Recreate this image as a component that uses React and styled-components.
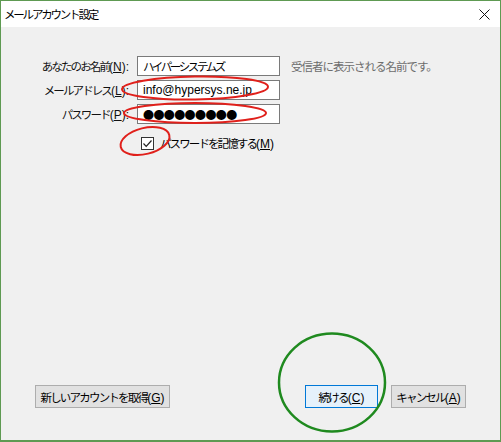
import { styled, createGlobalStyle } from 'styled-components';

const GlobalStyle = createGlobalStyle`
  html, body {
    margin: 0;
    padding: 0;
    background: #f0f0f0;
  }
  body {
    font-family: "Liberation Sans", "Noto Sans CJK JP", sans-serif;
  }
`

const Window = styled.div`
  position: relative;
  box-sizing: border-box;
  width: 501px;
  height: 442px;
  border: 1px solid #5e9a52;
  border-bottom-width: 2px;
  background: #f0f0f0;
  display: flex;
  flex-direction: column;
  color: #000;
`

const TitleBar = styled.div`
  height: 26px;
  background: #fff;
  display: flex;
  align-items: center;
  justify-content: space-between;
  padding: 0 10px 0 3px;
`

const Title = styled.div`
  font-family: "Noto Sans CJK JP", sans-serif;
  font-size: 11.5px;
  letter-spacing: -2.2px;
  color: #000;
`

const Form = styled.div`
  display: grid;
  grid-template-columns: 128px 143px auto;
  grid-auto-rows: 20px;
  column-gap: 8px;
  row-gap: 4px;
  margin-top: 29px;
  align-items: center;
`

const Label = styled.div`
  justify-self: end;
  font-family: "Noto Sans CJK JP", sans-serif;
  font-size: 11.5px;
  letter-spacing: -1.9px;
  white-space: nowrap;
  color: #111;
`

const Key = styled.span`
  font-family: "Liberation Sans", sans-serif;
  font-size: 12px;
  letter-spacing: 0;
`

const Field = styled.div`
  box-sizing: border-box;
  height: 20px;
  border: 1px solid #7a7a7a;
  background: #fff;
  padding: 0 5px;
  display: flex;
  align-items: center;
  white-space: nowrap;
  overflow: hidden;
  font-family: ${p => p.$latin ? '"Liberation Sans", sans-serif' : '"Noto Sans CJK JP", sans-serif'};
  font-size: ${p => p.$dots ? '11px' : p.$latin ? '12px' : '11.5px'};
  letter-spacing: ${p => p.$dots ? '-0.6px' : p.$latin ? '0' : '-2.4px'};
`

const Hint = styled.div`
  margin-left: 3px;
  font-family: "Noto Sans CJK JP", sans-serif;
  font-size: 11.5px;
  letter-spacing: -1px;
  color: #6d6d6d;
  white-space: nowrap;
`

const CheckRow = styled.div`
  grid-column: 2 / 4;
  display: flex;
  align-items: center;
  gap: 6px;
  margin: 7px 0 0 4px;
  align-self: start;
`

const Box = styled.div`
  box-sizing: border-box;
  width: 13px;
  height: 13px;
  border: 1px solid #333;
  background: #fff;
  display: flex;
  align-items: center;
  justify-content: center;
`

const CheckText = styled.span`
  font-family: "Noto Sans CJK JP", sans-serif;
  font-size: 11.5px;
  letter-spacing: -1.9px;
  white-space: nowrap;
`

const Footer = styled.div`
  margin-top: auto;
  display: flex;
  align-items: center;
  padding: 0 34px 32px 34px;
`

const Spacer = styled.div`
  flex: 1;
`

const Button = styled.button`
  box-sizing: border-box;
  width: ${p => p.$w}px;
  height: 23px;
  margin-left: ${p => p.$ml || 0}px;
  border: 1px solid ${p => p.$primary ? '#0078d7' : '#adadad'};
  background: ${p => p.$primary ? '#e5f1fb' : '#e1e1e1'};
  padding: 0;
  font-family: "Noto Sans CJK JP", sans-serif;
  font-size: 11.5px;
  letter-spacing: -1.8px;
  color: #000;
  white-space: nowrap;
`

const Overlay = styled.svg`
  position: absolute;
  top: -1px;
  left: -1px;
  width: 501px;
  height: 442px;
  pointer-events: none;
`

const Accel = ({ k, colon }) => (
  <Key>(<u>{k}</u>){colon ? ':' : ''}</Key>
)

export default function App() {
  return (
    <>
      <GlobalStyle />
      <Window>
        <TitleBar>
          <Title>メールアカウント設定</Title>
          <svg width="11" height="11" viewBox="0 0 11 11">
            <path d="M0.5 0.5 L10.5 10.5 M10.5 0.5 L0.5 10.5" stroke="#111" strokeWidth="1" fill="none" />
          </svg>
        </TitleBar>

        <Form>
          <Label>あなたのお名前<Accel k="N" colon /></Label>
          <Field>ハイパーシステムズ</Field>
          <Hint>受信者に表示される名前です。</Hint>

          <Label>メールアドレス<Accel k="L" colon /></Label>
          <Field $latin>info@hypersys.ne.jp</Field>
          <div />

          <Label>パスワード<Accel k="P" colon /></Label>
          <Field $dots>●●●●●●●●●</Field>
          <div />

          <div />
          <CheckRow>
            <Box>
              <svg width="11" height="11" viewBox="0 0 11 11">
                <path d="M1.5 5.5 L4.2 8.3 L9.5 2.5" stroke="#222" strokeWidth="1.2" fill="none" />
              </svg>
            </Box>
            <CheckText>パスワードを記憶する<Accel k="M" /></CheckText>
          </CheckRow>
        </Form>

        <Footer>
          <Button $w={135}>新しいアカウントを取得<Accel k="G" /></Button>
          <Spacer />
          <Button $w={73} $primary>続ける<Accel k="C" /></Button>
          <Button $w={75} $ml={13}>キャンセル<Accel k="A" /></Button>
        </Footer>

        <Overlay viewBox="0 0 501 442">
          <ellipse cx="195" cy="88" rx="73" ry="11.5" stroke="#e0201b" strokeWidth="2" fill="none" transform="rotate(-1 195 88)" />
          <ellipse cx="195" cy="113" rx="71" ry="10" stroke="#e0201b" strokeWidth="2" fill="none" />
          <ellipse cx="145" cy="141" rx="25" ry="13" stroke="#e0201b" strokeWidth="2" fill="none" transform="rotate(-14 145 141)" />
          <ellipse cx="332" cy="382.5" rx="53" ry="49" stroke="#1f8a1f" strokeWidth="2.5" fill="none" />
        </Overlay>
      </Window>
    </>
  );
}
